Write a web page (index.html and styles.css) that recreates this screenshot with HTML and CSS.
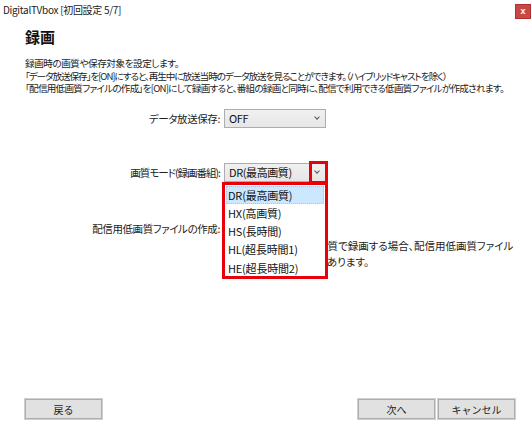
FILE: index.html
```html
<!DOCTYPE html>
<html lang="ja">
<head>
<meta charset="utf-8">
<title>DigitalTVbox</title>
<link rel="stylesheet" href="styles.css">
</head>
<body>
<div class="window">
  <div class="titlebar">
    <span class="title">DigitalTVbox [初回設定 5/7]</span>
    <span class="close">x</span>
  </div>
  <div class="content">
    <h1 class="heading">録画</h1>
    <div class="desc">
      <p class="l1">録画時の画質や保存対象を設定します。</p>
      <p class="l2">「データ放送保存」を[ON]にすると、再生中に放送当時のデータ放送を見ることができます。（ハイブリッドキャストを除く）</p>
      <p class="l3">「配信用低画質ファイルの作成」を[ON]にして録画すると、番組の録画と同時に、配信で利用できる低画質ファイルが作成されます。</p>
    </div>
    <div class="form">
      <div class="row row-data">
        <span class="label">データ放送保存:</span>
        <div class="select"><span class="val">OFF</span><span class="chev"></span></div>
      </div>
      <div class="row row-quality">
        <span class="label label-q">画質モード(録画番組):</span>
        <div class="select-wrap">
          <div class="select"><span class="val">DR(最高画質)</span><span class="chev"></span></div>
          <div class="mark-arrow"></div>
          <div class="dropdown">
            <div class="item active">DR(最高画質)</div>
            <div class="item">HX(高画質)</div>
            <div class="item">HS(長時間)</div>
            <div class="item">HL(超長時間1)</div>
            <div class="item">HE(超長時間2)</div>
          </div>
        </div>
      </div>
      <div class="row row-low">
        <span class="label">配信用低画質ファイルの作成:</span>
        <div class="select"><span class="val">OFF</span><span class="chev"></span></div>
      </div>
      <div class="note">
        <p>※HX・HS・HL以外の画質で録画する場合、配信用低画質ファイル</p>
        <p>は作成されない場合があります。</p>
      </div>
    </div>
  </div>
  <div class="footer">
    <button class="btn">戻る</button>
    <div class="right">
      <button class="btn">次へ</button>
      <button class="btn">キャンセル</button>
    </div>
  </div>
</div>
</body>
</html>
```
FILE: styles.css
```css
* { box-sizing: border-box; }
html, body { margin: 0; padding: 0; background: #fff; }
body {
  font-family: "Noto Sans CJK JP", "Noto Sans", sans-serif;
  font-feature-settings: "palt";
  text-autospace: no-autospace;
  color: #1a1a1a;
  width: 531px;
  height: 424px;
  overflow: hidden;
}
p { margin: 0; }
.window {
  display: flex;
  flex-direction: column;
  height: 424px;
}
.titlebar {
  display: flex;
  justify-content: space-between;
  align-items: flex-start;
  height: 24px;
  padding: 3px 0 0 3px;
}
.title { font-size: 10px; line-height: 14px; color: #222; letter-spacing: -0.3px; }
.close {
  width: 16px;
  height: 15px;
  margin-top: 1px;
  background: #c84848;
  border: 1px solid #b03030;
  color: #fff;
  font-family: "Liberation Sans", sans-serif;
  font-weight: bold;
  font-size: 9px;
  line-height: 12px;
  text-align: center;
}
.content { padding: 0 25px; position: relative; }
.heading {
  margin: 3px 0 0 0;
  font-size: 15px;
  line-height: 20px;
  font-weight: bold;
  color: #111;
}
.desc {
  margin-top: 10px;
  font-size: 9.6px;
  line-height: 12.5px;
  color: #222;
  letter-spacing: -0.45px;
  white-space: nowrap;
}
.desc .l2 { letter-spacing: -1.05px; }
.desc .l3 { letter-spacing: -0.75px; }
.form { position: relative; }
.row {
  display: grid;
  grid-template-columns: 195px 102px;
  column-gap: 4px;
  align-items: center;
}
.row-data { margin-top: 14px; }
.row-quality { margin-top: 35px; }
.row-low { margin-top: 37px; }
.label {
  text-align: right;
  font-size: 10.5px;
  color: #222;
  white-space: nowrap;
  letter-spacing: -0.4px;
}
.label-q { letter-spacing: -1px; }
.select {
  height: 19px;
  display: flex;
  align-items: center;
  justify-content: space-between;
  padding: 0 6px 0 4px;
  background: linear-gradient(#f0f0f0, #e6e6e6);
  border: 1px solid #adadad;
  font-size: 11px;
  color: #111;
}
.val { letter-spacing: -0.4px; }
.chev {
  width: 4px;
  height: 4px;
  border-right: 1px solid #555;
  border-bottom: 1px solid #555;
  transform: rotate(45deg);
  margin-top: -3px;
}
.select-wrap { position: relative; }
.mark-arrow {
  position: absolute;
  left: 85px;
  top: -2px;
  width: 19px;
  height: 23px;
  border: 3px solid #e8000b;
}
.dropdown {
  position: absolute;
  left: -2px;
  top: 19px;
  width: 106px;
  height: 97px;
  border: 3px solid #e8000b;
  background: #fff;
  padding: 1px 1px;
  z-index: 2;
}
.item {
  height: 18.3px;
  line-height: 18px;
  font-size: 11px;
  padding-left: 2px;
  color: #111;
  white-space: nowrap;
  letter-spacing: -0.2px;
}
.item.active {
  background: #cce8ff;
  border: 1px dotted #99c9ef;
  line-height: 16px;
  padding-left: 1px;
}
.note {
  margin-left: 199px;
  margin-top: 0;
  font-size: 10.5px;
  line-height: 16px;
  letter-spacing: 0;
  white-space: nowrap;
  color: #222;
}
.footer {
  margin-top: auto;
  display: flex;
  justify-content: space-between;
  padding: 0 16px 5px 25px;
}
.right { display: flex; gap: 3px; }
.btn {
  width: 77px;
  height: 20px;
  background: #e1e1e1;
  border: 1px solid #adadad;
  outline: 1px solid #d0d0d0;
  font-family: "Noto Sans CJK JP", sans-serif;
  font-size: 10px;
  color: #222;
  padding: 0;
}
```
